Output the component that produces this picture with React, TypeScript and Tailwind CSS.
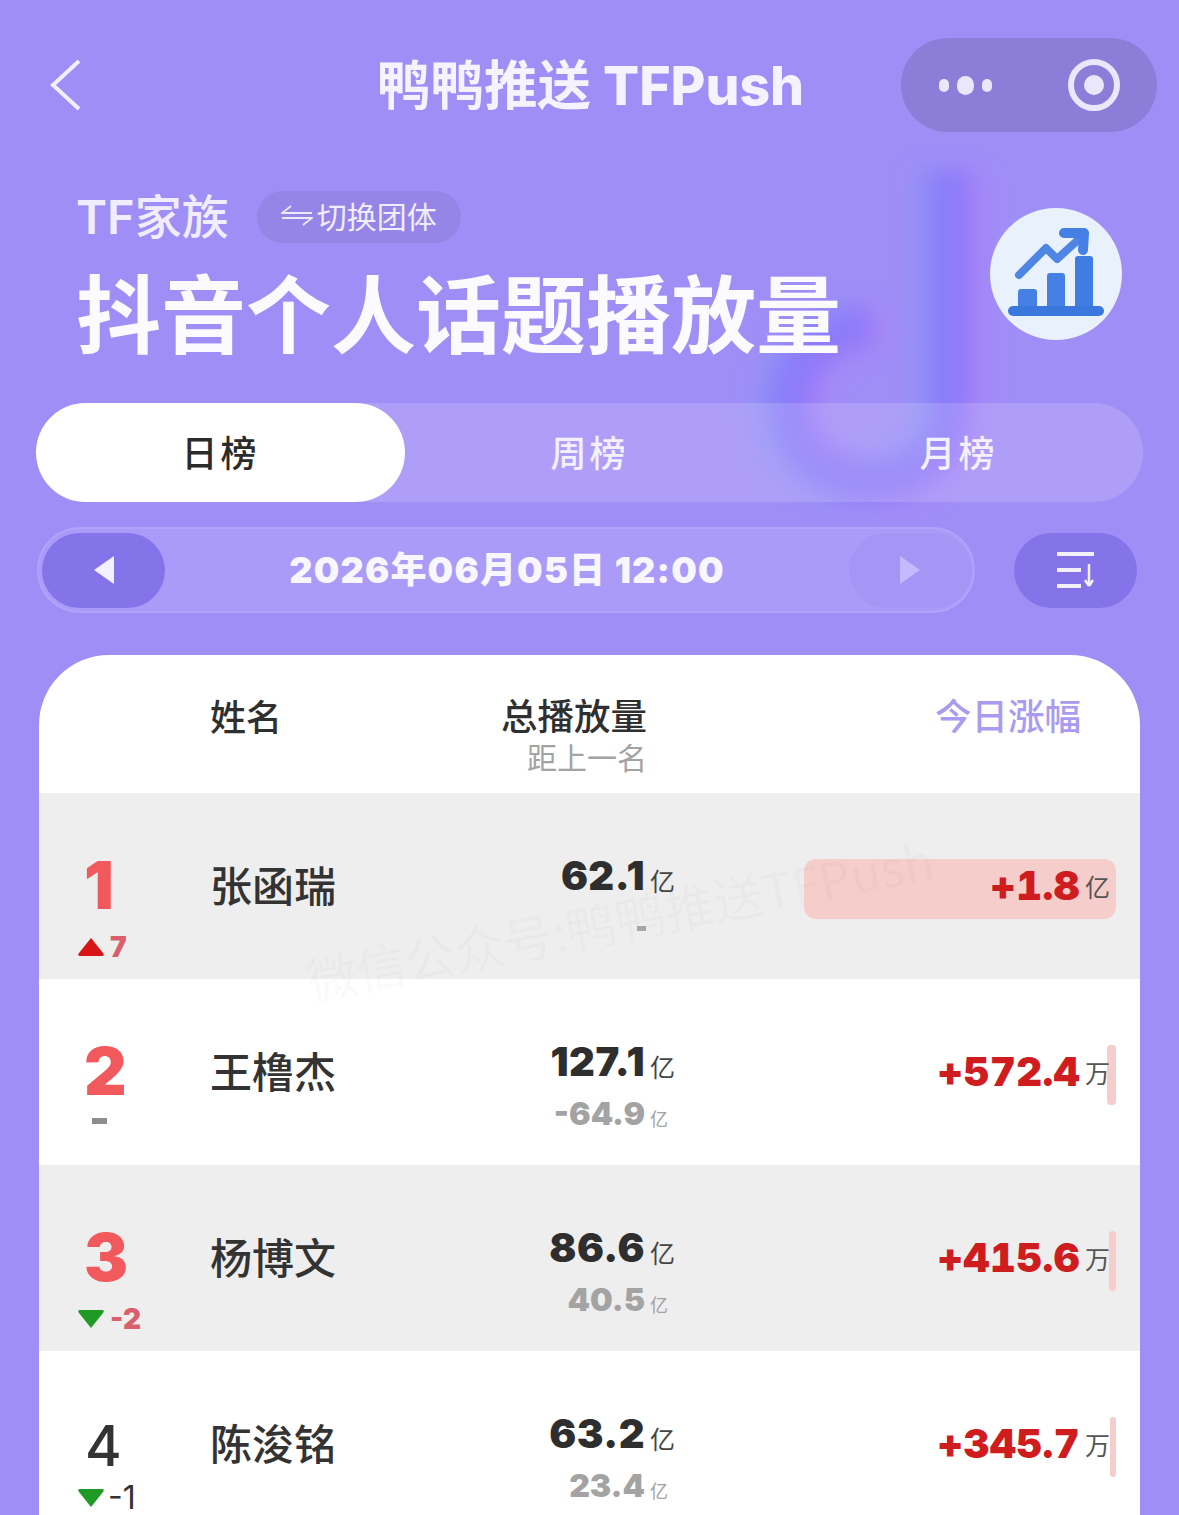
import React from 'react';

const CJK = '"Noto Sans CJK SC", sans-serif';
const NOTE_PATH = 'M130 175C80 180 50 215 50 255C50 300 85 330 130 330C175 330 210 300 210 255V20';

type Row = {
  rank: number;
  name: string;
  total: string;
  diff: string;
  gain: string;
  unit: string;
  bar: number;
  move: 'up' | 'down' | 'same';
  moveText: string;
};

const ROWS: Row[] = [
  { rank: 1, name: '张函瑞', total: '62.1', diff: '-', gain: '+1.8', unit: '亿', bar: 312, move: 'up', moveText: '7' },
  { rank: 2, name: '王橹杰', total: '127.1', diff: '-64.9', gain: '+572.4', unit: '万', bar: 9, move: 'same', moveText: '' },
  { rank: 3, name: '杨博文', total: '86.6', diff: '40.5', gain: '+415.6', unit: '万', bar: 7, move: 'down', moveText: '-2' },
  { rank: 4, name: '陈浚铭', total: '63.2', diff: '23.4', gain: '+345.7', unit: '万', bar: 6, move: 'down', moveText: '-1' },
];

function NoteLogo() {
  return (
    <svg className="absolute left-[720px] top-[130px] w-[340px] h-[410px] blur-[11px]" viewBox="-20 -20 340 410" fill="none">
      <path d={NOTE_PATH} transform="translate(-14 0)" stroke="#8a95f6" strokeWidth="44" opacity="0.7" />
      <path d={NOTE_PATH} transform="translate(16 4)" stroke="#b07df9" strokeWidth="40" opacity="0.55" />
      <path d={NOTE_PATH} stroke="#8877f8" strokeWidth="42" opacity="0.75" />
    </svg>
  );
}

function ChartIcon() {
  return (
    <svg className="w-[96px] h-[92px]" viewBox="0 0 96 92" fill="none">
      <path d="M11 47L38 20L49 31L70 12" stroke="#4f86e4" strokeWidth="8" strokeLinecap="round" strokeLinejoin="round" />
      <path d="M56 5H76L75 22" stroke="#4680e4" strokeWidth="10" strokeLinecap="round" strokeLinejoin="round" />
      <rect x="10" y="61" width="19" height="24" rx="3" fill="#4680e4" />
      <rect x="39" y="45" width="18" height="40" rx="3" fill="#4680e4" />
      <rect x="67" y="28" width="18" height="57" rx="3" fill="#3f7de2" />
      <rect x="0" y="78" width="96" height="10" rx="5" fill="#3b78de" />
    </svg>
  );
}

function RankMove({ row }: { row: Row }) {
  if (row.move === 'same') {
    return (
      <div className="h-[30px] pl-[15px]">
        <div className="w-[15px] h-[6px] bg-[#8d8d8d]" />
      </div>
    );
  }
  const isTop = row.rank <= 3;
  return (
    <div className={`flex items-center h-[30px] ${isTop ? 'gap-[5px]' : 'gap-[3px]'}`}>
      <svg className="w-[28px] h-[20px]" viewBox="0 0 28 20">
        {row.move === 'up' ? (
          <path d="M14 1L26 16Q28 19 25 19H3Q0 19 2 16Z" fill="#d81414" />
        ) : (
          <path d="M14 19L26 4Q28 1 25 1H3Q0 1 2 4Z" fill="#1f9a24" />
        )}
      </svg>
      <span
        className={
          isTop
            ? 'text-[28px] leading-none font-black text-[#d9606a] font-[Inter]'
            : 'text-[32px] leading-none font-normal text-[#333333] font-[Inter]'
        }
      >
        {row.moveText}
      </span>
    </div>
  );
}

function RankRow({ row, shaded }: { row: Row; shaded: boolean }) {
  const isTop = row.rank <= 3;
  return (
    <div className={`flex items-center h-[186px] ${shaded ? 'bg-[#eeeeee]' : 'bg-white'}`}>
      <div className={`w-[171px] pl-[38px] pt-[38px] ${isTop ? '' : 'pb-[7px]'}`}>
        <div
          className={
            isTop
              ? 'ml-[7px] mb-[10px] h-[74px] text-[66px] leading-[74px] font-black text-[#f2595c] font-[Inter]'
              : 'ml-[8px] mt-[3px] h-[74px] text-[56px] leading-[74px] font-medium text-[#333333] font-[Inter]'
          }
        >
          {row.rank}
        </div>
        <RankMove row={row} />
      </div>
      <div className="w-[260px] pb-[4px] text-[42px] leading-none font-medium text-[#333333]" style={{ fontFamily: CJK }}>
        {row.name}
      </div>
      <div className="w-[205px] flex flex-col items-end pt-[30px]">
        <div className="flex items-end gap-[5px] h-[50px]">
          <span className="text-[40px] leading-[50px] font-black tracking-[0.5px] text-[#2e2e2e] font-[Inter]">{row.total}</span>
          <span className="text-[25px] leading-[42px] text-[#444444]" style={{ fontFamily: CJK }}>亿</span>
        </div>
        <div className="flex items-end gap-[5px] h-[50px] pr-[7px]">
          {row.diff === '-' ? (
            <div className="mr-[22px] mb-[20px] w-[9px] h-[5px] bg-[#a8a8a8]" />
          ) : (
            <>
              <span className="text-[32px] leading-[46px] font-black text-[#a3a3a3] font-[Inter]">{row.diff}</span>
              <span className="text-[18px] leading-[38px] text-[#a3a3a3]" style={{ fontFamily: CJK }}>亿</span>
            </>
          )}
        </div>
      </div>
      <div className="relative flex-1 mr-[24px] mt-[6px] h-[60px] flex items-center justify-end pr-[6px] pb-[6px]">
        <div
          className={`absolute right-0 top-0 h-[60px] bg-[#f5cdca] ${row.bar > 50 ? 'rounded-[12px]' : 'rounded-[4px]'}`}
          style={{ width: row.bar }}
        />
        <span className="relative text-[40px] leading-none font-black tabular-nums tracking-[0.5px] text-[#cf1c1f] font-[Inter]">{row.gain}</span>
        <span className="relative ml-[5px] text-[25px] leading-none text-[#555555]" style={{ fontFamily: CJK }}>{row.unit}</span>
      </div>
    </div>
  );
}

export default function App() {
  return (
    <div className="relative w-[1179px] h-[1515px] overflow-hidden bg-[#a08ef7]" style={{ fontFamily: CJK }}>
      <NoteLogo />

      <div className="relative">
        {/* nav bar */}
        <div className="grid grid-cols-[1fr_auto_1fr] items-center pt-[38px] pl-[24px] pr-[22px]">
          <svg className="ml-[26px] w-[32px] h-[52px]" viewBox="0 0 32 52" fill="none">
            <path d="M29 2L3 26L29 50" stroke="#f1eeff" strokeWidth="4" />
          </svg>
          <div className="pb-[2px] text-[53.5px] leading-none font-bold text-[#f5f3ff] whitespace-nowrap">
            鸭鸭推送 <span className="font-[Inter] font-extrabold">TFPush</span>
          </div>
          <div className="justify-self-end flex items-center w-[256px] h-[94px] rounded-full bg-[#8b7dd8]">
            <div className="w-[128px] flex justify-center items-center gap-[8px]">
              <span className="w-[10px] h-[13px] rounded-full bg-[#ebe7fb]" />
              <span className="w-[17px] h-[19px] rounded-full bg-[#ebe7fb]" />
              <span className="w-[10px] h-[13px] rounded-full bg-[#ebe7fb]" />
            </div>
            <div className="flex-1 flex justify-center pl-[2px]">
              <div className="w-[52px] h-[52px] rounded-full border-[6px] border-[#ebe7fb] flex items-center justify-center">
                <span className="w-[20px] h-[20px] rounded-full bg-[#ebe7fb]" />
              </div>
            </div>
          </div>
        </div>

        {/* heading */}
        <div className="flex items-start justify-between mt-[59px] pl-[76px] pr-[57px] h-[212px]">
          <div>
            <div className="flex items-center gap-[28px] h-[52px]">
              <span className="pb-[4px] text-[47px] leading-none font-medium text-[#f0edff]">
                <span className="font-[Inter] font-semibold">TF</span>家族
              </span>
              <div className="flex items-center gap-[4px] h-[52px] w-[204px] pl-[24px] pb-[4px] rounded-full bg-[#9585e6]">
                <svg className="w-[32px] h-[24px]" viewBox="0 0 32 24" fill="none">
                  <path d="M31 10H1L10 3M1 15H31L22 22" stroke="#ece8ff" strokeWidth="1.8" />
                </svg>
                <span className="text-[30px] leading-none text-[#f0edff]">切换团体</span>
              </div>
            </div>
            <div className="mt-[19px] text-[85px] leading-[96px] font-bold text-[#fbfaff] whitespace-nowrap">
              抖音个人话题播放量
            </div>
          </div>
          <div className="mt-[17px] w-[132px] h-[132px] rounded-full bg-[#e9f2fc] flex items-center justify-center">
            <ChartIcon />
          </div>
        </div>

        {/* tabs */}
        <div className="mx-[36px] w-[1107px] h-[99px] grid grid-cols-3 rounded-full bg-white/15 text-[36px] tracking-[3px] text-[#f3f0ff]">
          <div className="flex items-center justify-center pb-[4px] rounded-full bg-white text-[#2b2b2b] font-medium">日榜</div>
          <div className="flex items-center justify-center pb-[4px] font-medium">周榜</div>
          <div className="flex items-center justify-center pb-[4px] font-medium">月榜</div>
        </div>

        {/* date row */}
        <div className="flex items-center mt-[25px] pl-[37px] pr-[42px]">
          <div className="flex items-center justify-between w-[938px] h-[86px] pl-[3px] pr-[1px] rounded-full bg-white/[.12] border-[2px] border-[#b0a3fb]">
            <div className="w-[123px] h-[75px] rounded-full bg-[#8573ea] flex items-center justify-center">
              <svg className="w-[22px] h-[28px]" viewBox="0 0 22 28"><path d="M21 0V28L1 14Z" fill="#f3f0ff" /></svg>
            </div>
            <span className="text-[36px] leading-none font-black tracking-[1.2px] text-[#f8f6ff]" style={{ fontFamily: `Inter, ${CJK}` }}>
              2026年06月05日 12:00
            </span>
            <div className="w-[123px] h-[75px] rounded-full bg-[#a595f5] flex items-center justify-center">
              <svg className="w-[22px] h-[28px]" viewBox="0 0 22 28"><path d="M1 0V28L21 14Z" fill="#c5baff" /></svg>
            </div>
          </div>
          <div className="ml-auto w-[123px] h-[75px] rounded-full bg-[#8573ea] flex items-center justify-center">
            <svg className="w-[40px] h-[38px]" viewBox="0 0 40 38" fill="none">
              <path d="M1 3H38M1 19H25M1 35H25" stroke="#f3f0ff" strokeWidth="4" />
              <path d="M33 13V34M33 35L29 29M33 35L37 29" stroke="#f3f0ff" strokeWidth="2.5" />
            </svg>
          </div>
        </div>

        {/* table card */}
        <div className="relative mt-[42px] mx-[39px] w-[1101px] rounded-t-[70px] overflow-hidden bg-white">
          <div className="flex h-[138px] pt-[40px]">
            <div className="w-[171px]" />
            <div className="w-[291px] text-[36px] leading-[40px] font-medium text-[#2f2f2f]">姓名</div>
            <div className="w-[146px] flex flex-col items-end">
              <div className="text-[36.5px] leading-[40px] font-medium text-[#2f2f2f] whitespace-nowrap">总播放量</div>
              <div className="text-[30px] leading-[42px] text-[#a3a3a3] whitespace-nowrap">距上一名</div>
            </div>
            <div className="flex-1 pr-[59px] text-right text-[36.5px] leading-[40px] font-medium text-[#a99cf0]">今日涨幅</div>
          </div>
          {ROWS.map((row, i) => (
            <RankRow key={row.rank} row={row} shaded={i % 2 === 0} />
          ))}
          {/* watermark */}
          <div className="absolute left-[262px] top-[226px] -rotate-[11deg] text-[50px] text-[#000000]/[0.018] whitespace-nowrap pointer-events-none">
            微信公众号:鸭鸭推送TFPush
          </div>
          <div className="absolute left-[306px] top-[703px] -rotate-[10deg] text-[48px] text-[#000000]/[0.018] whitespace-nowrap pointer-events-none">
            微信公众号:鸭鸭推送TFPush
          </div>
        </div>
      </div>
    </div>
  );
}
